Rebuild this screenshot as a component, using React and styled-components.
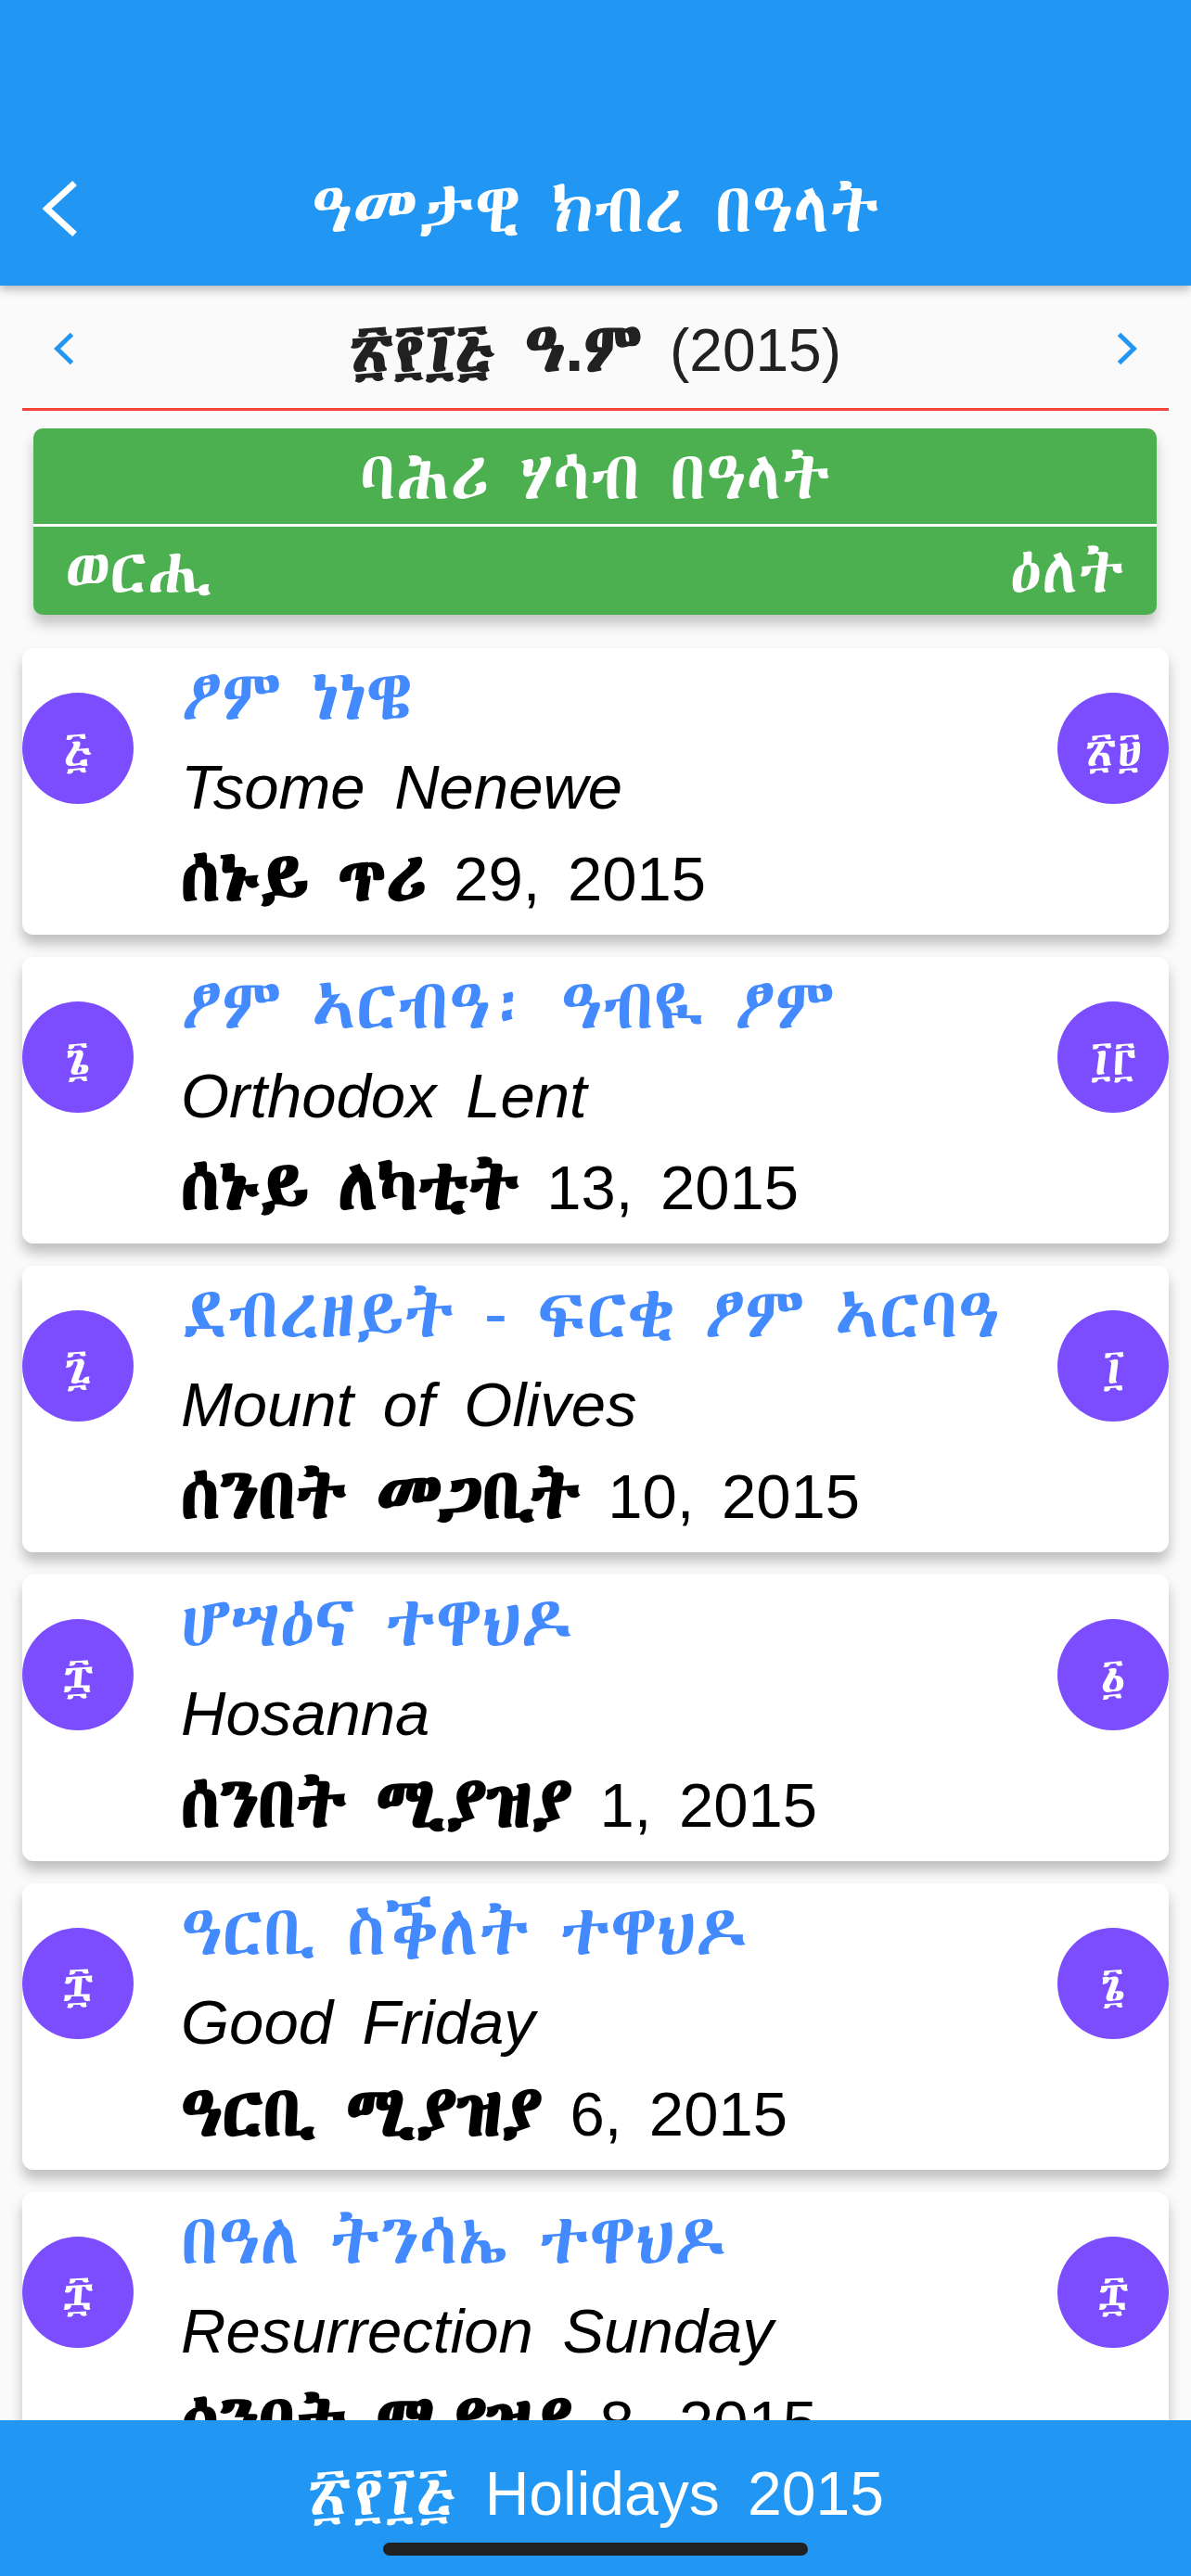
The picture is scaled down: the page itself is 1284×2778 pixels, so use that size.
import React from 'react'
import styled, { createGlobalStyle } from 'styled-components'

const FONT = `"Liberation Sans", "Abyssinica SIL", "Noto Serif Ethiopic", "FreeSerif", "Noto Sans Ethiopic", sans-serif`

const GlobalStyle = createGlobalStyle`
  html, body {
    margin: 0;
    padding: 0;
    background: #fafafa;
  }
  body {
    font-family: ${FONT};
  }
`

const Screen = styled.div`
  width: 1284px;
  height: 2778px;
  display: flex;
  flex-direction: column;
  overflow: hidden;
  background: #fafafa;
`

// Ethiopic runs are drawn a little larger than the Latin ones, as in the app
const Ge = styled.span`
  font-size: ${(p) => p.$scale || 1.15}em;
  font-weight: ${(p) => (p.$bold ? 700 : 400)};
`

const AppBar = styled.header`
  height: 308px;
  flex-shrink: 0;
  background: #2196f3;
  box-shadow: 0 4px 10px rgba(0, 0, 0, 0.28);
  position: relative;
  z-index: 2;
  display: flex;
  flex-direction: column;
  justify-content: flex-end;
`

const Toolbar = styled.div`
  height: 166px;
  display: grid;
  grid-template-columns: 140px 1fr 140px;
  align-items: center;
`

const BackButton = styled.div`
  padding-left: 46px;
  display: flex;
  align-items: center;
`

const AppTitle = styled.h1`
  margin: 0;
  text-align: center;
  color: #fff;
  font-size: 60px;
  font-weight: 400;
  word-spacing: 12px;
`

const YearNav = styled.div`
  box-sizing: border-box;
  height: 132px;
  flex-shrink: 0;
  display: flex;
  align-items: center;
  justify-content: space-between;
  padding: 4px 58px 0 58px;
`

const YearLabel = styled.div`
  font-size: 64px;
  color: #212121;
  word-spacing: 12px;
`

const RedRule = styled.div`
  height: 3px;
  margin: 0 24px;
  background: #f44336;
  flex-shrink: 0;
`

const Content = styled.div`
  flex: 1;
  min-height: 0;
  overflow: hidden;
  padding: 19px 24px 0;
`

const HeaderCard = styled.div`
  margin: 0 13px 36px 12px;
  background: #4caf50;
  border-radius: 10px;
  box-shadow: 0 10px 14px rgba(0, 0, 0, 0.22);
  color: #fff;
`

const HeaderTitle = styled.div`
  height: 103px;
  display: flex;
  align-items: center;
  justify-content: center;
  font-size: 58px;
  word-spacing: 12px;
  border-bottom: 3px solid #fff;
`

const HeaderRow = styled.div`
  height: 95px;
  display: flex;
  align-items: center;
  justify-content: space-between;
  padding: 0 35px 0 34px;
  font-size: 60px;
`

const List = styled.div`
  display: flex;
  flex-direction: column;
  gap: 24px;
`

const Card = styled.div`
  height: 309px;
  flex-shrink: 0;
  background: #fff;
  border-radius: 12px;
  box-shadow: 0 10px 14px rgba(0, 0, 0, 0.24);
  display: flex;
  align-items: flex-start;
`

const NumberBadge = styled.div`
  width: 120px;
  height: 120px;
  margin-top: 48px;
  flex-shrink: 0;
  border-radius: 50%;
  background: #7c4dff;
  color: #fff;
  display: flex;
  align-items: center;
  justify-content: center;
  font-size: 54px;
  font-weight: 400;
  line-height: 1;
`

const CardText = styled.div`
  flex: 1;
  padding: 3px 0 0 51px;
  font-size: 66px;
  line-height: 96px;
  word-spacing: 11px;
  white-space: nowrap;
`

const EventName = styled.div`
  color: #448aff;
`

const EnglishName = styled.div`
  color: #000;
  font-style: italic;
  font-size: 67px;
  word-spacing: 13px;
`

const EventDate = styled.div`
  color: #000;
  font-size: 67px;
`

const BottomBar = styled.footer`
  height: 168px;
  flex-shrink: 0;
  background: #2196f3;
  position: relative;
  z-index: 2;
  display: flex;
  flex-direction: column;
  align-items: center;
`

const BottomLabel = styled.div`
  margin-top: 38px;
  color: #fff;
  font-size: 66px;
  line-height: 76px;
  word-spacing: 12px;
`

const HomeIndicator = styled.div`
  margin-top: 15px;
  width: 458px;
  height: 14px;
  border-radius: 7px;
  background: #212121;
`

const Chevron = ({ dir = 'left', color, w, h, stroke }) => (
  <svg width={w} height={h} viewBox={`0 0 ${w} ${h}`}>
    <polyline
      points={
        dir === 'left'
          ? `${w - stroke / 2},${stroke / 2} ${stroke / 2 + 1},${h / 2} ${w - stroke / 2},${h - stroke / 2}`
          : `${stroke / 2},${stroke / 2} ${w - stroke / 2 - 1},${h / 2} ${stroke / 2},${h - stroke / 2}`
      }
      fill="none"
      stroke={color}
      strokeWidth={stroke}
    />
  </svg>
)

const holidays = [
  { name: 'ፆም ነነዌ', en: 'Tsome Nenewe', day: 'ሰኑይ ጥሪ', num: '29, 2015', month: '፭', date: '፳፱' },
  { name: 'ፆም ኣርብዓ፡ ዓብዪ ፆም', en: 'Orthodox Lent', day: 'ሰኑይ ለካቲት', num: '13, 2015', month: '፮', date: '፲፫' },
  { name: 'ደብረዘይት - ፍርቂ ፆም ኣርባዓ', en: 'Mount of Olives', day: 'ሰንበት መጋቢት', num: '10, 2015', month: '፯', date: '፲' },
  { name: 'ሆሣዕና ተዋህዶ', en: 'Hosanna', day: 'ሰንበት ሚያዝያ', num: '1, 2015', month: '፰', date: '፩' },
  { name: 'ዓርቢ ስቕለት ተዋህዶ', en: 'Good Friday', day: 'ዓርቢ ሚያዝያ', num: '6, 2015', month: '፰', date: '፮' },
  { name: 'በዓለ ትንሳኤ ተዋህዶ', en: 'Resurrection Sunday', day: 'ሰንበት ሚያዝያ', num: '8, 2015', month: '፰', date: '፰' },
]

const HolidayCard = ({ item }) => (
  <Card>
    <NumberBadge>{item.month}</NumberBadge>
    <CardText>
      <EventName>
        <Ge>{item.name}</Ge>
      </EventName>
      <EnglishName>{item.en}</EnglishName>
      <EventDate>
        <Ge $scale={1.13} $bold>
          {item.day}
        </Ge>{' '}
        {item.num}
      </EventDate>
    </CardText>
    <NumberBadge>{item.date}</NumberBadge>
  </Card>
)

const App = () => (
  <Screen>
    <GlobalStyle />
    <AppBar>
      <Toolbar>
        <BackButton>
          <Chevron dir="left" color="#fff" w={38} h={62} stroke={7} />
        </BackButton>
        <AppTitle>
          <Ge $scale={1.25}>ዓመታዊ ክብረ በዓላት</Ge>
        </AppTitle>
        <div />
      </Toolbar>
    </AppBar>
    <YearNav>
      <Chevron dir="left" color="#2196f3" w={22} h={36} stroke={5} />
      <YearLabel>
        <Ge $bold>፳፻፲፭ ዓ.ም</Ge> (2015)
      </YearLabel>
      <Chevron dir="right" color="#2196f3" w={22} h={36} stroke={5} />
    </YearNav>
    <RedRule />
    <Content>
      <HeaderCard>
        <HeaderTitle>
          <Ge $scale={1.26}>ባሕሪ ሃሳብ በዓላት</Ge>
        </HeaderTitle>
        <HeaderRow>
          <Ge>ወርሒ</Ge>
          <Ge>ዕለት</Ge>
        </HeaderRow>
      </HeaderCard>
      <List>
        {holidays.map((item) => (
          <HolidayCard key={item.en} item={item} />
        ))}
      </List>
    </Content>
    <BottomBar>
      <BottomLabel>
        <Ge>፳፻፲፭</Ge> Holidays 2015
      </BottomLabel>
      <HomeIndicator />
    </BottomBar>
  </Screen>
)

export default App
